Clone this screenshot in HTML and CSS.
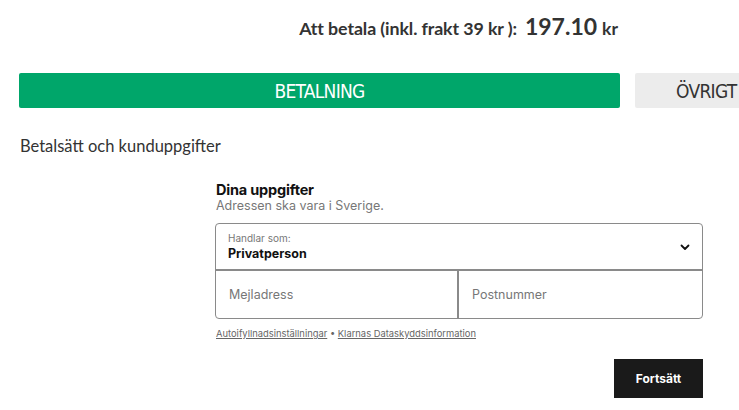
FILE: index.html
```html
<!DOCTYPE html>
<html lang="sv">
<head>
<meta charset="utf-8">
<link rel="stylesheet" href="styles.css">
</head>
<body>
<div class="page">
  <div class="total-row">
    <span class="total-label">Att betala (inkl. frakt 39 kr ):</span>
    <span class="total-amount">197.10</span>
    <span class="total-cur">kr</span>
  </div>
  <div class="tabs">
    <div class="tab tab-active">BETALNING</div>
    <div class="tab tab-next">ÖVRIGT</div>
  </div>
  <h2 class="section-title">Betalsätt och kunduppgifter</h2>
  <div class="klarna">
    <div class="k-title">Dina uppgifter</div>
    <div class="k-sub">Adressen ska vara i Sverige.</div>
    <div class="k-box">
      <div class="k-select">
        <div class="k-select-text">
          <div class="k-small">Handlar som:</div>
          <div class="k-value">Privatperson</div>
        </div>
        <svg class="k-chev" width="10" height="7" viewBox="0 0 10 7"><path d="M1.5 1.5 L5 5 L8.5 1.5" fill="none" stroke="#111" stroke-width="1.8" stroke-linecap="round" stroke-linejoin="round"/></svg>
      </div>
      <div class="k-inputs">
        <div class="k-input k-input-left">Mejladress</div>
        <div class="k-input">Postnummer</div>
      </div>
    </div>
    <div class="k-links"><span class="k-link">Autoifyllnadsinställningar</span> • <span class="k-link">Klarnas Dataskyddsinformation</span></div>
    <div class="k-actions">
      <div class="k-btn">Fortsätt</div>
    </div>
  </div>
</div>
</body>
</html>
```
FILE: styles.css
```css
* { box-sizing: border-box; }
html, body { margin: 0; padding: 0; background: #fff; overflow: hidden; }
body { width: 739px; height: 410px; font-family: Lato, "Open Sans", sans-serif; color: #333; }
.page { padding-left: 19px; }
.total-row {
  width: 601px;
  display: flex;
  justify-content: flex-end;
  align-items: baseline;
  padding-top: 12px;
  height: 73px;
  color: #333;
  font-weight: 700;
  padding-right: 2px;
}
.total-label { font-size: 17.8px; letter-spacing: -0.1px; }
.total-amount { font-size: 23px; margin-left: 8px; }
.total-cur { font-size: 17.5px; margin-left: 5px; }
.tabs { display: flex; gap: 15px; height: 35px; width: 720px; overflow: hidden; }
.tab {
  flex-shrink: 0;
  height: 35px;
  border-radius: 2px;
  display: flex;
  align-items: center;
  font-size: 19px;
  font-family: "DejaVu Sans Condensed", "DejaVu Sans", sans-serif;
  font-stretch: condensed;
  letter-spacing: -0.7px;
}
.tab-active { width: 601px; background: #00a66a; color: #fff; justify-content: center; }
.tab-next { width: 200px; background: #ececec; color: #333; padding-left: 41px; }
.section-title {
  margin: 0;
  padding-top: 28px;
  padding-left: 1px;
  font-size: 16.5px;
  font-weight: 400;
  color: #333;
  line-height: 20px;
  height: 73px;
}
.klarna { margin-left: 196px; width: 488px; font-family: Inter, "Open Sans", sans-serif; }
.k-title { font-size: 14.5px; font-weight: 700; color: #111; line-height: 17px; padding-left: 1px; letter-spacing: -0.2px; }
.k-sub { font-size: 12.5px; color: #777; line-height: 15px; padding-left: 1px; }
.k-box {
  margin-top: 10px;
  border: 1px solid #8a8a8a;
  border-radius: 4px;
  height: 96px;
  display: flex;
  flex-direction: column;
}
.k-select {
  height: 47px;
  border-bottom: 2px solid #8a8a8a;
  display: flex;
  align-items: center;
  justify-content: space-between;
  padding: 0 12px 0 12px;
}
.k-small { font-size: 10px; color: #777; line-height: 12px; }
.k-value { font-size: 12.5px; font-weight: 700; color: #111; line-height: 15px; margin-top: 2px; }
.k-chev { margin-top: 2px; }
.k-inputs { flex: 1; display: flex; }
.k-input {
  flex: 1;
  display: flex;
  align-items: center;
  padding-left: 13px;
  font-size: 12.5px;
  color: #777;
}
.k-input-left { border-right: 2px solid #8a8a8a; flex: 0 0 243px; }
.k-links {
  margin-top: 9px;
  font-size: 9.4px;
  color: #666;
  line-height: 12px;
  padding-left: 1px;
}
.k-link { text-decoration: underline; }
.k-actions { display: flex; justify-content: flex-end; margin-top: 19px; }
.k-btn {
  width: 89px;
  height: 39px;
  background: #1a1a1a;
  color: #fff;
  font-size: 12px;
  font-weight: 700;
  display: flex;
  align-items: center;
  justify-content: center;
}
```
